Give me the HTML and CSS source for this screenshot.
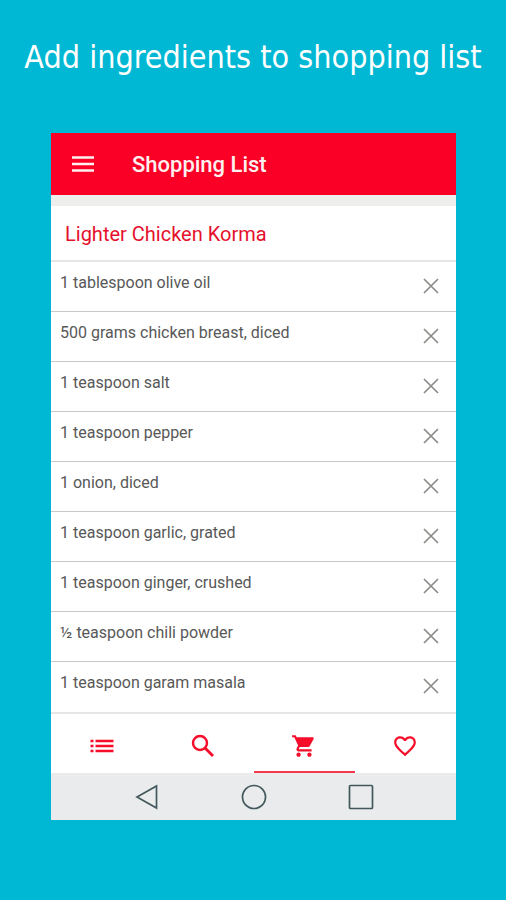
FILE: index.html
```html
<!DOCTYPE html>
<html lang="en">
<head>
<meta charset="utf-8">
<meta name="viewport" content="width=device-width, initial-scale=1">
<title>Shopping List</title>
<link rel="stylesheet" href="styles.css">
</head>
<body>
<svg class="sprite" aria-hidden="true">
  <symbol id="close" viewBox="0 0 16 16"><path d="M1 1l14 14M15 1L1 15" fill="none" stroke="currentColor" stroke-width="1.7"/></symbol>
</svg>
<h1 class="headline">Add ingredients to shopping list</h1>
<main class="phone">
  <header class="app-bar">
    <button class="icon-button" type="button" aria-label="Menu">
      <svg width="24" height="24" viewBox="0 0 24 24"><path d="M1 4.500h22M1 11h22M1 17.500h22" stroke="currentColor" stroke-width="2.400"/></svg>
    </button>
    <h2 class="app-title">Shopping List</h2>
  </header>
  <section class="recipe">
    <h3 class="recipe-title">Lighter Chicken Korma</h3>
    <ul class="items">
      <li class="item"><span>1 tablespoon olive oil</span><button class="remove" type="button" aria-label="Remove"><svg width="16" height="16"><use href="#close"/></svg></button></li>
      <li class="item"><span>500 grams chicken breast, diced</span><button class="remove" type="button" aria-label="Remove"><svg width="16" height="16"><use href="#close"/></svg></button></li>
      <li class="item"><span>1 teaspoon salt</span><button class="remove" type="button" aria-label="Remove"><svg width="16" height="16"><use href="#close"/></svg></button></li>
      <li class="item"><span>1 teaspoon pepper</span><button class="remove" type="button" aria-label="Remove"><svg width="16" height="16"><use href="#close"/></svg></button></li>
      <li class="item"><span>1 onion, diced</span><button class="remove" type="button" aria-label="Remove"><svg width="16" height="16"><use href="#close"/></svg></button></li>
      <li class="item"><span>1 teaspoon garlic, grated</span><button class="remove" type="button" aria-label="Remove"><svg width="16" height="16"><use href="#close"/></svg></button></li>
      <li class="item"><span>1 teaspoon ginger, crushed</span><button class="remove" type="button" aria-label="Remove"><svg width="16" height="16"><use href="#close"/></svg></button></li>
      <li class="item"><span>½ teaspoon chili powder</span><button class="remove" type="button" aria-label="Remove"><svg width="16" height="16"><use href="#close"/></svg></button></li>
      <li class="item"><span>1 teaspoon garam masala</span><button class="remove" type="button" aria-label="Remove"><svg width="16" height="16"><use href="#close"/></svg></button></li>
    </ul>
  </section>
  <nav class="tabs">
    <a class="tab" href="#list" aria-label="Recipes">
      <svg width="24" height="24" viewBox="0 0 24 24"><path d="M.5 7h3M.5 12h3M.5 17h3M5.500 7H23.500M5.500 12H23.500M5.500 17H23.500" stroke="currentColor" stroke-width="2.400"/></svg>
    </a>
    <a class="tab" href="#search" aria-label="Search">
      <svg width="24" height="24" viewBox="0 0 24 24" fill="none" stroke="currentColor"><circle cx="9" cy="9" r="7" stroke-width="2.400"/><path d="M14.300 14.300l7.700 7.700" stroke-width="2.900"/></svg>
    </a>
    <a class="tab tab-active" href="#shopping" aria-label="Shopping list" aria-current="page">
      <svg width="26" height="26" viewBox="0 0 24 24" fill="currentColor"><path d="M7 18c-1.100 0-1.990.9-1.990 2S5.900 22 7 22s2-.9 2-2-.9-2-2-2zM1 2v2h2l3.600 7.590-1.350 2.450c-.16.28-.25.610-.25.960 0 1.100.9 2 2 2h12v-2H7.420c-.14 0-.25-.11-.25-.25l.03-.12.900-1.630h7.450c.75 0 1.410-.41 1.750-1.030l3.580-6.490c.08-.14.120-.31.120-.48 0-.55-.45-1-1-1H5.210l-.94-2H1zm16 16c-1.100 0-1.990.9-1.990 2s.89 2 1.990 2 2-.9 2-2-.9-2-2-2z"/></svg>
    </a>
    <a class="tab" href="#favourites" aria-label="Favourites">
      <svg width="26" height="26" viewBox="0 0 24 24" fill="currentColor"><path d="M16.500 3c-1.740 0-3.410.81-4.500 2.090C10.910 3.810 9.240 3 7.500 3 4.420 3 2 5.420 2 8.500c0 3.780 3.400 6.860 8.550 11.540L12 21.350l1.450-1.320C18.600 15.360 22 12.280 22 8.500 22 5.420 19.580 3 16.500 3zm-4.400 15.550l-.1.100-.1-.1C7.140 14.240 4 11.390 4 8.500 4 6.500 5.500 5 7.500 5c1.540 0 3.040.99 3.570 2.360h1.870C13.460 5.990 14.960 5 16.500 5c2 0 3.500 1.500 3.500 3.500 0 2.890-3.140 5.740-7.900 10.050z"/></svg>
    </a>
  </nav>
  <footer class="system-bar">
    <button class="icon-button" type="button" aria-label="Back"><svg width="26" height="26" viewBox="0 0 26 26"><path d="M22.500 2V24L3 13z"/></svg></button>
    <button class="icon-button" type="button" aria-label="Home"><svg width="26" height="26" viewBox="0 0 26 26"><circle cx="13" cy="13" r="11.500"/></svg></button>
    <button class="icon-button" type="button" aria-label="Overview"><svg width="26" height="26" viewBox="0 0 26 26"><rect x="1.500" y="1.500" width="23" height="23" rx="1"/></svg></button>
  </footer>
</main>
</body>
</html>
```
FILE: styles.css
```css
* { box-sizing: border-box; }

body {
  margin: 0;
  min-height: 100vh;
  background: #00b8d4;
  font-family: Roboto, "Liberation Sans", sans-serif;
}

h1, h2, h3, ul { margin: 0; padding: 0; }

svg { display: block; }

.sprite { display: none; }

.headline {
  padding: 37px 0 56px;
  color: #fff;
  font: 400 32px/40px "DejaVu Sans Condensed", "DejaVu Sans", sans-serif;
  text-align: center;
  white-space: nowrap;
}

.phone {
  margin: 0 50px 0 51px;
  background: #fff;
}

.icon-button, .remove {
  padding: 0;
  border: 0;
  background: none;
  color: inherit;
}

.app-bar {
  display: flex;
  align-items: center;
  gap: 37px;
  height: 62px;
  padding: 2px 20px 0;
  background: #fb0026;
  color: #fff0f0;
}

.app-title {
  font-size: 22px;
  line-height: 28px;
  font-weight: 500;
}

.recipe {
  border-top: 11px solid #eeeeed;
}

.recipe-title {
  padding: 14px 14px 12px;
  border-bottom: 2px solid #e6e6e6;
  color: #e5102c;
  font-size: 20px;
  line-height: 28px;
  font-weight: 400;
}

.items { list-style: none; }

.item {
  display: flex;
  justify-content: space-between;
  align-items: flex-start;
  height: 50px;
  padding: 11px 17px 0 9px;
  border-bottom: 1px solid #c8c8c8;
  color: #585858;
  font-size: 16px;
  line-height: 20px;
}

.item:last-child { border-bottom: 0; }

.remove {
  margin-top: 5px;
  color: #8b8b88;
}

.tabs {
  display: flex;
  height: 61px;
  border-top: 2px solid #e6e6e6;
}

.tab {
  display: flex;
  flex: 1;
  align-items: center;
  justify-content: center;
  padding-top: 6px;
  border-bottom: 2px solid transparent;
  color: #f50d29;
}

.tab-active { border-bottom-color: #f5394d; }

.system-bar {
  display: flex;
  align-items: center;
  justify-content: center;
  gap: 81px;
  height: 47px;
  background: #e9ebec;
}

.system-bar svg {
  fill: none;
  stroke: #43585c;
  stroke-width: 1.7;
}
```
